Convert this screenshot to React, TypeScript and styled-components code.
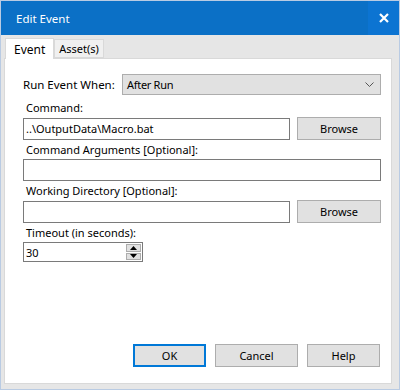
import React from 'react'
import styled, { createGlobalStyle } from 'styled-components'

const GlobalStyle = createGlobalStyle`
  html, body {
    margin: 0;
    padding: 0;
    background: #ffffff;
  }
  body {
    font-family: 'Noto Sans', 'Open Sans', sans-serif;
    font-size: 11px;
    color: #000000;
    white-space: nowrap;
  }
`

const Window = styled.div`
  width: 400px;
  height: 390px;
  box-sizing: border-box;
  border: 1px solid #b9cbe3;
  display: flex;
  flex-direction: column;
  background: #e6e6e6;
`

const TitleBar = styled.div`
  height: 34px;
  background: #0b70c6;
  display: flex;
  align-items: center;
  justify-content: space-between;
  color: #ffffff;
  flex-shrink: 0;
`

const Title = styled.span`
  padding-left: 15px;
  font-size: 11.5px;
`

const CloseButton = styled.div`
  width: 31px;
  height: 34px;
  background: #0c74d2;
  display: flex;
  align-items: center;
  justify-content: center;
`

const Body = styled.div`
  flex: 1;
  display: flex;
  flex-direction: column;
  padding: 2px 7px 5px 3px;
`

const TabStrip = styled.div`
  display: flex;
  align-items: flex-end;
  height: 21px;
  padding-left: 1px;
`

const Tab = styled.div<{ active?: boolean }>`
  box-sizing: border-box;
  height: ${({ active }) => (active ? '21px' : '19px')};
  padding: 0 ${({ active }) => (active ? '8px' : '4px')};
  margin-bottom: ${({ active }) => (active ? '-1px' : '0')};
  background: ${({ active }) => (active ? '#ffffff' : '#f0f0f0')};
  border: 1px solid #d9d9d9;
  border-bottom: ${({ active }) => (active ? 'none' : '1px solid #d9d9d9')};
  display: flex;
  align-items: center;
  font-size: ${({ active }) => (active ? '12px' : '11px')};
  position: relative;
  z-index: ${({ active }) => (active ? 1 : 0)};
`

const Panel = styled.div`
  flex: 1;
  background: #ffffff;
  border: 1px solid #d9d9d9;
  display: flex;
  flex-direction: column;
  padding: 15px 10px 16px 18px;
`

const Row = styled.div`
  display: flex;
  align-items: center;
  gap: 7px;
`

const InlineLabel = styled.span`
  width: 92px;
  flex-shrink: 0;
  font-size: 11.5px;
`

const FieldLabel = styled.div<{ top?: number }>`
  height: 16px;
  line-height: 16px;
  margin-top: ${({ top }) => top ?? 2}px;
  margin-bottom: 1px;
  padding-left: 3px;
`

const Select = styled.div`
  flex: 1;
  height: 21px;
  box-sizing: border-box;
  background: #e1e1e1;
  border: 1px solid #adadad;
  display: flex;
  align-items: center;
  justify-content: space-between;
  padding: 0 6px 0 4px;
  letter-spacing: -0.3px;
`

const TextBox = styled.div`
  flex: 1;
  height: 22px;
  box-sizing: border-box;
  border: 1px solid #7a7a7a;
  background: #ffffff;
  display: flex;
  align-items: center;
  padding-left: 2px;
`

const Button = styled.div<{ w: number; primary?: boolean }>`
  width: ${({ w }) => w}px;
  height: 23px;
  box-sizing: border-box;
  background: #e1e1e1;
  border: ${({ primary }) => (primary ? '2px solid #0078d7' : '1px solid #adadad')};
  display: flex;
  align-items: center;
  justify-content: center;
  flex-shrink: 0;
`

const Spin = styled.div`
  width: 120px;
  height: 20px;
  box-sizing: border-box;
  border: 1px solid #7a7a7a;
  display: flex;
  align-items: center;
  justify-content: space-between;
  padding: 1px;
`

const SpinValue = styled.span`
  padding-left: 1px;
`

const SpinButtons = styled.div`
  width: 15px;
  height: 100%;
  display: flex;
  flex-direction: column;
  gap: 1px;
`

const SpinButton = styled.div`
  flex: 1;
  background: #e1e1e1;
  border: 1px solid #adadad;
  display: flex;
  align-items: center;
  justify-content: center;
`

const Footer = styled.div`
  margin-top: auto;
  display: flex;
  justify-content: flex-end;
  gap: 9px;
  padding-right: 1px;
`

const Arrow = ({ up }: { up?: boolean }) => (
  <svg width="7" height="4" viewBox="0 0 7 4">
    <path d={up ? 'M0 4 L3.5 0 L7 4 Z' : 'M0 0 L3.5 4 L7 0 Z'} fill="#000" />
  </svg>
)

const App: React.FC = () => (
  <>
    <GlobalStyle />
    <Window>
      <TitleBar>
        <Title>Edit Event</Title>
        <CloseButton>
          <svg width="10" height="10" viewBox="0 0 10 10">
            <path d="M1 1 L9 9 M9 1 L1 9" stroke="#fff" strokeWidth="2.2" />
          </svg>
        </CloseButton>
      </TitleBar>
      <Body>
        <TabStrip>
          <Tab active>Event</Tab>
          <Tab>Asset(s)</Tab>
        </TabStrip>
        <Panel>
          <Row>
            <InlineLabel>Run Event When:</InlineLabel>
            <Select>
              <span>After Run</span>
              <svg width="9" height="5" viewBox="0 0 9 5">
                <path d="M0.5 0.5 L4.5 4.5 L8.5 0.5" stroke="#555" fill="none" />
              </svg>
            </Select>
          </Row>
          <FieldLabel top={5}>Command:</FieldLabel>
          <Row>
            <TextBox>..\OutputData\Macro.bat</TextBox>
            <Button w={84}>Browse</Button>
          </Row>
          <FieldLabel>Command Arguments [Optional]:</FieldLabel>
          <Row>
            <TextBox />
          </Row>
          <FieldLabel>Working Directory [Optional]:</FieldLabel>
          <Row>
            <TextBox />
            <Button w={84}>Browse</Button>
          </Row>
          <FieldLabel>Timeout (in seconds):</FieldLabel>
          <Spin>
            <SpinValue>30</SpinValue>
            <SpinButtons>
              <SpinButton>
                <Arrow up />
              </SpinButton>
              <SpinButton>
                <Arrow />
              </SpinButton>
            </SpinButtons>
          </Spin>
          <Footer>
            <Button w={73} primary>
              OK
            </Button>
            <Button w={83}>Cancel</Button>
            <Button w={73}>Help</Button>
          </Footer>
        </Panel>
      </Body>
    </Window>
  </>
)

export default App
